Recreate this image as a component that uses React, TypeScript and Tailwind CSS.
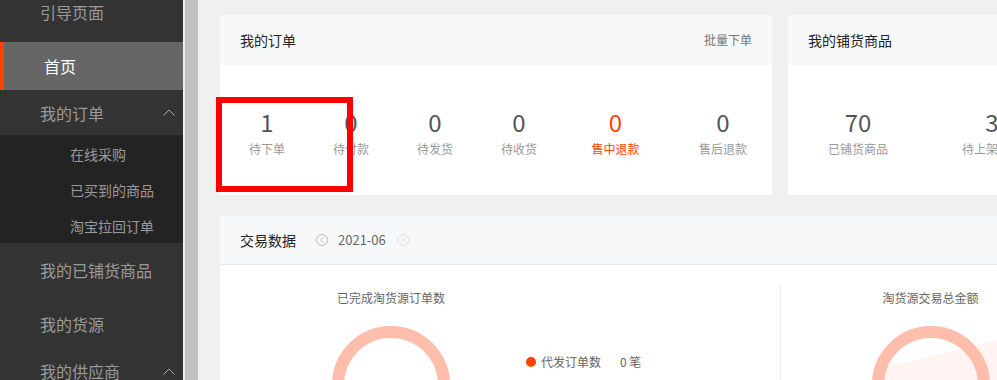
import React from 'react';

function ChevronUp() {
  return (
    <svg width="12" height="7" viewBox="0 0 12 7" className="shrink-0">
      <polyline points="0.5,6.5 6,1 11.5,6.5" fill="none" stroke="#aaa" strokeWidth="1" />
    </svg>
  );
}

function CircleArrow({ dir, color }: { dir: 'left' | 'right'; color: string }) {
  const pts = dir === 'left' ? '7,3.5 4.5,6 7,8.5' : '5,3.5 7.5,6 5,8.5';
  return (
    <svg width="12" height="12" viewBox="0 0 12 12" className="shrink-0">
      <circle cx="6" cy="6" r="5.5" fill="none" stroke={color} strokeWidth="1" />
      <polyline points={pts} fill="none" stroke={color} strokeWidth="1" />
    </svg>
  );
}

const orderStats = [
  { value: '1', label: '待下单', w: 'w-[84px]' },
  { value: '0', label: '待付款', w: 'w-[84px]' },
  { value: '0', label: '待发货', w: 'w-[84px]' },
  { value: '0', label: '待收货', w: 'w-[84px]' },
  { value: '0', label: '售中退款', w: 'w-[109px]', hot: true },
  { value: '0', label: '售后退款', w: 'w-[106px]' },
];

function Sidebar() {
  return (
    <aside className="w-[183px] shrink-0 bg-[#333] text-[16px] text-[#9a9a9a]">
      <div className="h-[42px] pl-[40px] leading-[24px]">引导页面</div>
      <div className="h-[48px] bg-[#666] border-l-4 border-[#ff4400] pl-[40px] flex items-center text-white">首页</div>
      <div className="h-[45px] pl-[40px] pr-[8px] flex items-center justify-between">
        <span>我的订单</span>
        <ChevronUp />
      </div>
      <div className="h-[108px] bg-[#232323] text-[14px] pt-[1px]">
        <div className="h-[36px] pl-[70px] flex items-center">在线采购</div>
        <div className="h-[36px] pl-[70px] flex items-center">已买到的商品</div>
        <div className="h-[36px] pl-[70px] flex items-center">淘宝拉回订单</div>
      </div>
      <div className="h-[54px] pl-[40px] flex items-center">我的已铺货商品</div>
      <div className="h-[53px] pl-[40px] flex items-center">我的货源</div>
      <div className="h-[42px] pl-[40px] pr-[8px] flex items-center justify-between">
        <span>我的供应商</span>
        <ChevronUp />
      </div>
    </aside>
  );
}

function Ring() {
  return (
    <svg width="120" height="70" viewBox="0 0 120 70" className="block mx-auto">
      <circle cx="60" cy="60" r="53" fill="none" stroke="#ffbdac" strokeWidth="12" />
    </svg>
  );
}

export default function App() {
  return (
    <div className="w-[997px] h-[380px] flex overflow-hidden font-['Noto_Sans_CJK_SC',sans-serif]">
      <Sidebar />
      <div className="w-[2px] shrink-0 bg-[#f0f0f0]" />
      <div className="w-[13px] shrink-0 bg-[#c1c1c1]" />
      <main className="flex-1 min-w-0 bg-[#f0f0f0] pl-[22px] pt-[15px] overflow-hidden">
        <div className="flex gap-[16px]">
          {/* 我的订单 */}
          <section className="relative w-[552px] shrink-0 bg-white">
            <header className="h-[50px] bg-[#f7f8fa] flex items-center justify-between px-[20px]">
              <span className="text-[14px] text-[#222]">我的订单</span>
              <span className="text-[12px] text-[#777]">批量下单</span>
            </header>
            <div className="h-[130px] flex pl-[5px] pt-[43px]">
              {orderStats.map((s, i) => (
                <div key={i} className={`${s.w} shrink-0 flex flex-col items-center`}>
                  <span className={`text-[24px] leading-[28px] ${s.hot ? 'text-[#ff4400]' : 'text-[#555]'}`}>{s.value}</span>
                  <span className={`mt-[5px] text-[12px] leading-[16px] ${s.hot ? 'text-[#ff4400]' : 'text-[#999]'}`}>{s.label}</span>
                </div>
              ))}
            </div>
            <div className="absolute left-[-4px] top-[82px] w-[137px] h-[95px] border-[6px] border-[#ff0000]" />
          </section>

          {/* 我的铺货商品 */}
          <section className="w-[400px] shrink-0 bg-white">
            <header className="h-[50px] bg-[#f7f8fa] flex items-center px-[20px]">
              <span className="text-[14px] text-[#222]">我的铺货商品</span>
            </header>
            <div className="h-[130px] flex pt-[43px]">
              <div className="w-[140px] shrink-0 flex flex-col items-center">
                <span className="text-[24px] leading-[28px] text-[#555]">70</span>
                <span className="mt-[5px] text-[12px] leading-[16px] text-[#999]">已铺货商品</span>
              </div>
              <div className="w-[128px] shrink-0 flex flex-col items-center">
                <span className="text-[24px] leading-[28px] text-[#555]">3</span>
                <span className="mt-[5px] text-[12px] leading-[16px] text-[#999]">待上架商品</span>
              </div>
            </div>
          </section>
        </div>

        {/* 交易数据 */}
        <section className="mt-[21px] w-[900px] bg-white">
          <header className="h-[49px] bg-[#f7f8fa] border-b border-[#e8e8e8] flex items-center pl-[20px]">
            <span className="text-[14px] text-[#222]">交易数据</span>
            <span className="ml-[20px]"><CircleArrow dir="left" color="#bbb" /></span>
            <span className="ml-[10px] text-[13px] text-[#666]">2021-06</span>
            <span className="ml-[11px]"><CircleArrow dir="right" color="#ddd" /></span>
          </header>
          <div className="h-[200px] flex">
            <div className="w-[560px] shrink-0 flex items-start">
              <div className="w-[240px] ml-[51px] pt-[25px] shrink-0">
                <div className="text-center text-[12px] leading-[16px] text-[#666]">已完成淘货源订单数</div>
                <div className="mt-[19px]">
                  <Ring />
                </div>
              </div>
              <div className="ml-[15px] mt-[89px] flex items-center text-[12px] leading-[16px] text-[#666]">
                <span className="w-[10px] h-[10px] rounded-full bg-[#ff4400]" />
                <span className="ml-[5px]">代发订单数</span>
                <span className="ml-[19px]">0 笔</span>
              </div>
            </div>
            <div className="mt-[20px] border-l border-[#eee] w-[300px] shrink-0 relative">
              <svg width="300" height="100" viewBox="0 0 300 100" className="absolute left-0 top-0">
                <polygon points="92,85 300,35 300,100 92,100" fill="#fff4f1" />
              </svg>
              <div className="relative pt-[5px]">
                <div className="text-center text-[12px] leading-[16px] text-[#666]">淘货源交易总金额</div>
                <div className="mt-[19px]">
                  <Ring />
                </div>
              </div>
            </div>
          </div>
        </section>
      </main>
    </div>
  );
}
